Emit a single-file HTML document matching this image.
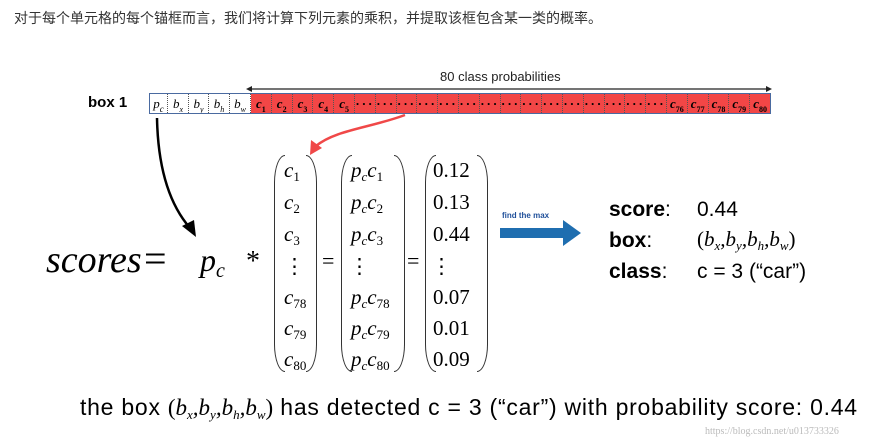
<!DOCTYPE html>
<html><head><meta charset="utf-8"><style>
body{margin:0;width:889px;height:440px;background:#fff;position:relative;overflow:hidden;font-family:"Liberation Sans",sans-serif}
.a{position:absolute;white-space:nowrap}
.ser{font-family:"Liberation Serif",serif;font-style:italic}
.cell{position:absolute;top:0;height:19px;border-right:1px dotted #555;box-sizing:border-box;font-family:"Liberation Serif",serif;font-style:italic;font-size:13px;line-height:19px;text-align:center}
.cell sub{font-style:normal}
.mr{position:absolute;font-family:"Liberation Serif",serif;font-size:21px;line-height:21px}
.mr i sub,.ser sub{font-size:13px;font-style:normal}
.mr i sub.it,.ser sub.it{font-style:italic}
sub{vertical-align:-4px}
.par{position:absolute;width:10px;border:1.6px solid #333;top:155px;height:215px}
.pl{border-right:none;border-radius:12px 0 0 12px/30px 0 0 30px}
.pr{border-left:none;border-radius:0 12px 12px 0/0 30px 30px 0}
</style></head><body>
<div class="a" style="left:14px;top:8px;font-size:14px;color:#333;font-family:'Liberation Sans','Noto Sans CJK SC',sans-serif">对于每个单元格的每个锚框而言，我们将计算下列元素的乘积，并提取该框包含某一类的概率。</div>

<div class="a" style="left:440px;top:69px;font-size:13px;color:#222">80 class probabilities</div>
<svg class="a" style="left:245px;top:84px" width="530" height="10"><line x1="6" y1="5" x2="522" y2="5" stroke="#222" stroke-width="1.2"/><path d="M1 5 L7 2 L7 8Z M527 5 L521 2 L521 8Z" fill="#222"/></svg>
<div class="a" style="left:88px;top:94px;font-size:15px;font-weight:bold">box 1</div>

<div class="a" style="left:149px;top:93px;width:620px;height:19px;border:1.5px solid #4a6aa0;box-sizing:content-box;overflow:hidden" id="bx">
<div class="cell" style="left:0;width:18px">p<sub style="font-size:9px;font-style:italic">c</sub></div>
<div class="cell" style="left:18px;width:21px">b<sub style="font-size:8px;font-style:italic">x</sub></div>
<div class="cell" style="left:39px;width:20px">b<sub style="font-size:8px;font-style:italic">y</sub></div>
<div class="cell" style="left:59px;width:21px">b<sub style="font-size:8px;font-style:italic">h</sub></div>
<div class="cell" style="left:80px;width:21px">b<sub style="font-size:8px;font-style:italic">w</sub></div>
<div style="position:absolute;left:101px;top:0;width:520px;height:19px;background:#f24646"></div>
<div id="rc"></div>
</div>
<script>
var rc=document.getElementById('rc'),lab=['1','2','3','4','5'];var h='';
for(var i=0;i<25;i++){var t;if(i<5)t='c<sub style="font-size:8px">'+lab[i]+'</sub>';else if(i<20)t='<span style="font-style:normal;letter-spacing:2px">···</span>';else t='c<sub style="font-size:8px">'+(i+56)+'</sub>';
h+='<div class="cell" style="left:'+(101+i*20.8)+'px;width:20.8px;font-weight:bold">'+t+'</div>';}
rc.innerHTML=h;
</script>

<svg class="a" style="left:0;top:0" width="889" height="440">
<path d="M157 118 C158 170 170 205 190 228" fill="none" stroke="#000" stroke-width="2.5"/>
<path d="M196 237 L182 226 L194 220Z" fill="#000"/>
<path d="M405 115 C370 128 335 130 316 146" fill="none" stroke="#f04848" stroke-width="2.5"/>
<path d="M310 155 L311 140 L322 148Z" fill="#f04848"/>
<path d="M500 228 L563 228 L563 220 L581 233 L563 246 L563 238 L500 238Z" fill="#1f6eb0"/>
</svg>

<div class="a ser" style="left:46px;top:240px;font-size:38px;line-height:40px">scores</div>
<div class="a" style="left:144px;top:239px;font-size:40px;line-height:40px;font-family:'Liberation Serif',serif">=</div>
<div class="a ser" style="left:200px;top:240px;font-size:32px;line-height:40px">p<sub class="it" style="font-size:20px;vertical-align:-6px">c</sub></div>
<div class="a" style="left:246px;top:246px;font-size:28px;font-family:'Liberation Serif',serif">*</div>

<div class="par pl" style="left:274px"></div><div class="par pr" style="left:306px"></div>
<div class="par pl" style="left:341px"></div><div class="par pr" style="left:394px"></div>
<div class="par pl" style="left:425px"></div><div class="par pr" style="left:477px"></div>
<div class="a" style="left:322px;top:248px;font-size:22px;font-family:'Liberation Serif',serif">=</div>
<div class="a" style="left:407px;top:248px;font-size:22px;font-family:'Liberation Serif',serif">=</div>

<div id="m"></div>
<script>
var ys=[160,192,224,256,287,318,349],m='';
var c1=['c<sub>1</sub>','c<sub>2</sub>','c<sub>3</sub>','','c<sub>78</sub>','c<sub>79</sub>','c<sub>80</sub>'];
for(var i=0;i<7;i++){
 if(i==3){m+='<div class="mr" style="left:284px;top:'+ys[i]+'px">⋮</div><div class="mr" style="left:349px;top:'+ys[i]+'px">⋮</div><div class="mr" style="left:431px;top:'+ys[i]+'px">⋮</div>';continue;}
 m+='<div class="mr" style="left:284px;top:'+ys[i]+'px"><i>'+c1[i]+'</i></div>';
 m+='<div class="mr" style="left:351px;top:'+ys[i]+'px"><i>p<sub class="it">c</sub>'+c1[i]+'</i></div>';
}
var v=['0.12','0.13','0.44','','0.07','0.01','0.09'];
for(var i=0;i<7;i++)if(v[i])m+='<div class="mr" style="left:433px;top:'+ys[i]+'px">'+v[i]+'</div>';
document.getElementById('m').innerHTML=m;
</script>

<div class="a" style="left:502px;top:211px;font-size:8px;font-weight:bold;color:#1f4f9a">find the max</div>
<div class="a" style="left:609px;top:197px;font-size:21px;line-height:26px"><b>score</b>:</div>
<div class="a" style="left:697px;top:197px;font-size:21px;line-height:26px">0.44</div>
<div class="a" style="left:609px;top:228px;font-size:21px;line-height:26px"><b>box</b>:</div>
<div class="a ser" style="left:697px;top:226px;font-size:21px;line-height:26px"><span style="font-style:normal">(</span>b<sub class="it">x</sub>,b<sub class="it">y</sub>,b<sub class="it">h</sub>,b<sub class="it">w</sub><span style="font-style:normal">)</span></div>
<div class="a" style="left:609px;top:259px;font-size:21px;line-height:26px"><b>class</b>:</div>
<div class="a" style="left:697px;top:259px;font-size:21px;line-height:26px">c = 3 (“car”)</div>

<div class="a" style="left:80px;top:393px;font-size:23px;line-height:28px;letter-spacing:0.75px">the box <span class="ser" style="letter-spacing:0"><span style="font-style:normal">(</span>b<sub class="it">x</sub>,b<sub class="it">y</sub>,b<sub class="it">h</sub>,b<sub class="it">w</sub><span style="font-style:normal">)</span></span> has detected c = 3 (“car”) with probability score: 0.44</div>
<div class="a" style="left:705px;top:426px;font-size:10px;color:#bbb;font-family:'Liberation Serif',serif">https://blog.csdn.net/u013733326</div>
</body></html>
